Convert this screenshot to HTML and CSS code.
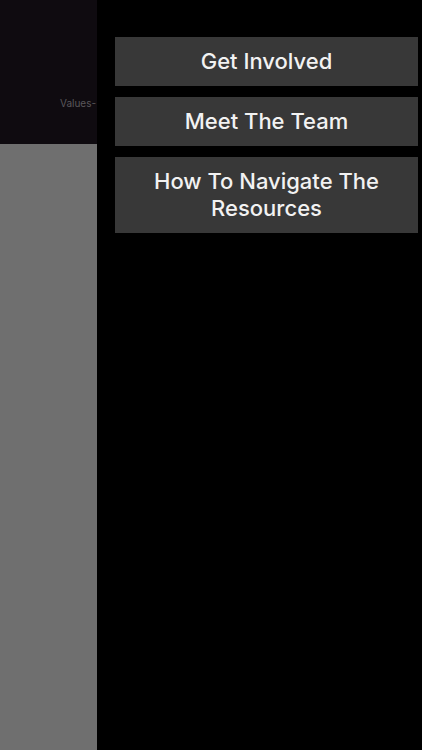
FILE: index.html
```html
<!DOCTYPE html>
<html>
<head>
<meta charset="utf-8">
<link rel="stylesheet" href="styles.css">
</head>
<body>
<div class="app">
  <div class="left">
    <div class="header"><span class="crumb">Values-</span></div>
    <div class="content"></div>
  </div>
  <nav class="drawer">
    <button class="item">Get Involved</button>
    <button class="item">Meet The Team</button>
    <button class="item">How To Navigate The Resources</button>
  </nav>
</div>
</body>
</html>
```
FILE: styles.css
```css
* { box-sizing: border-box; }
html, body { margin: 0; padding: 0; background: #000; }
.app {
  display: flex;
  width: 422px;
  height: 750px;
  overflow: hidden;
  font-family: Inter, "Noto Sans", sans-serif;
}
.left {
  width: 97px;
  flex: none;
  display: flex;
  flex-direction: column;
  overflow: hidden;
}
.header {
  height: 144px;
  background: #0f0b10;
  padding: 91px 0 0 60px;
  white-space: nowrap;
}
.crumb {
  font-size: 10px;
  line-height: 14px;
  color: #5a575b;
}
.content {
  flex: 1;
  background: #6f6f6f;
}
.drawer {
  flex: 1;
  background: #000;
  padding: 37px 4px 0 18px;
  display: flex;
  flex-direction: column;
  gap: 11px;
}
.item {
  font-family: inherit;
  background: #383838;
  color: #f2f2f2;
  border: none;
  font-size: 22px;
  font-weight: 500;
  line-height: 27px;
  padding: 11px 28px;
  text-align: center;
}
```
